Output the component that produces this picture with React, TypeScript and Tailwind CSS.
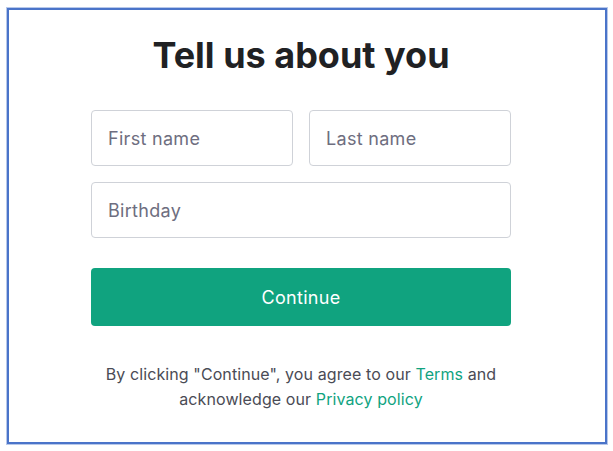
const Field = ({ label, className = "" }: { label: string; className?: string }) => (
  <div
    className={`h-[56px] rounded-[4px] border border-[#cfd2d8] bg-white flex items-center px-4 text-[18px] tracking-[0.3px] text-[#6e6e80] ${className}`}
  >
    {label}
  </div>
)

export default function App() {
  return (
    <div className="w-[613px] h-[451px] bg-white pt-2 pl-[7px] font-['Inter',sans-serif]">
      <div className="w-[600px] h-[436px] border-2 border-[#4a74c9] shadow-[0_0_0_1px_#b7c8ea] flex flex-col">
        <div className="w-[420px] ml-[82px] flex flex-col">
          <h1 className="mt-[26px] text-center text-[36px] leading-[38px] font-bold text-[#202123]">
            Tell us about you
          </h1>

          <div className="mt-[36px] flex gap-4">
            <Field label="First name" className="flex-1" />
            <Field label="Last name" className="flex-1" />
          </div>
          <Field label="Birthday" className="mt-[16px]" />

          <button className="mt-[30px] h-[58px] rounded-[4px] bg-[#10a37f] text-white text-[18px] tracking-[0.3px]">
            Continue
          </button>

          <p className="mt-[36px] text-center text-[16px] leading-[25px] tracking-[0.1px] text-[#4a4b55]">
            By clicking "Continue", you agree to our <span className="text-[#10a37f]">Terms</span> and
            <br />
            acknowledge our <span className="text-[#10a37f]">Privacy policy</span>
          </p>
        </div>
      </div>
    </div>
  )
}
